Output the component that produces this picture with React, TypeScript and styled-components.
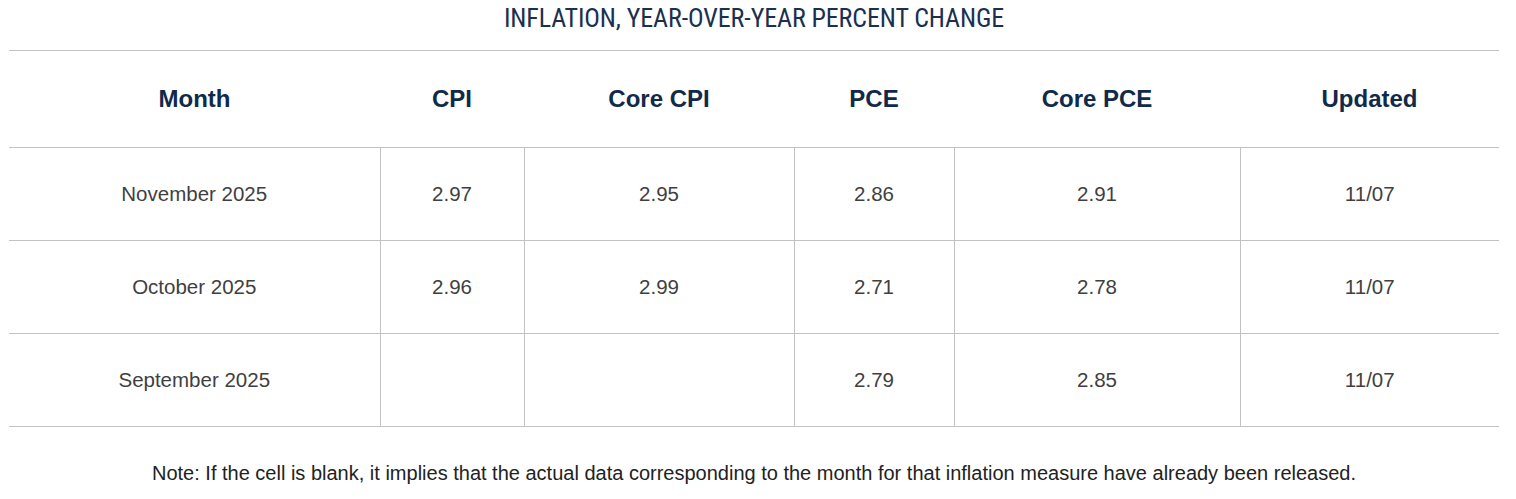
import React from 'react';
import styled, { createGlobalStyle } from 'styled-components';

const GlobalStyle = createGlobalStyle`
  html, body {
    margin: 0;
    padding: 0;
    background: #ffffff;
  }
  body {
    font-family: "Liberation Sans", Arial, sans-serif;
  }
`;

const Wrapper = styled.div`
  width: 1490px;
  margin-left: 9px;
  display: flex;
  flex-direction: column;
`;

const Title = styled.h2`
  margin: 0 0 14px;
  height: 36px;
  line-height: 36px;
  text-align: center;
  font-family: "Liberation Sans Narrow", "Roboto Condensed", "Liberation Sans", sans-serif;
  font-stretch: condensed;
  font-weight: 400;
  font-size: 26px;
  color: #1b2f4e;
  letter-spacing: -0.1px;
`;

const Table = styled.table`
  width: 1490px;
  table-layout: fixed;
  border-collapse: collapse;
  border-top: 1px solid #c2c2c2;
`;

const HeadCell = styled.th`
  height: 96px;
  padding: 0;
  text-align: center;
  vertical-align: middle;
  font-size: 24px;
  line-height: 28px;
  font-weight: 700;
  color: #0f2a4a;
  border-bottom: 1px solid #c2c2c2;
`;

const Row = styled.tr`
  border-bottom: 1px solid #c2c2c2;
`;

const Cell = styled.td`
  height: 92px;
  padding: 0;
  text-align: center;
  vertical-align: middle;
  font-size: 20.5px;
  line-height: 24px;
  color: #3f3f3f;
  border-left: 1px solid #c2c2c2;

  &:first-child {
    border-left: none;
  }
`;

const Note = styled.p`
  margin: 34px 0 0;
  text-align: center;
  font-size: 20px;
  line-height: 24px;
  color: #222222;
`;

const columns = [
  { label: 'Month', width: 371 },
  { label: 'CPI', width: 144 },
  { label: 'Core CPI', width: 270 },
  { label: 'PCE', width: 160 },
  { label: 'Core PCE', width: 286 },
  { label: 'Updated', width: 259 },
];

const rows = [
  ['November 2025', '2.97', '2.95', '2.86', '2.91', '11/07'],
  ['October 2025', '2.96', '2.99', '2.71', '2.78', '11/07'],
  ['September 2025', '', '', '2.79', '2.85', '11/07'],
];

export default function App() {
  return (
    <>
      <GlobalStyle />
      <Wrapper>
        <Title>INFLATION, YEAR-OVER-YEAR PERCENT CHANGE</Title>
        <Table>
          <colgroup>
            {columns.map((c) => (
              <col key={c.label} style={{ width: c.width }} />
            ))}
          </colgroup>
          <thead>
            <tr>
              {columns.map((c) => (
                <HeadCell key={c.label}>{c.label}</HeadCell>
              ))}
            </tr>
          </thead>
          <tbody>
            {rows.map((r) => (
              <Row key={r[0]}>
                {r.map((v, i) => (
                  <Cell key={i}>{v}</Cell>
                ))}
              </Row>
            ))}
          </tbody>
        </Table>
        <Note>
          Note: If the cell is blank, it implies that the actual data corresponding to the month for that
          inflation measure have already been released.
        </Note>
      </Wrapper>
    </>
  );
}
